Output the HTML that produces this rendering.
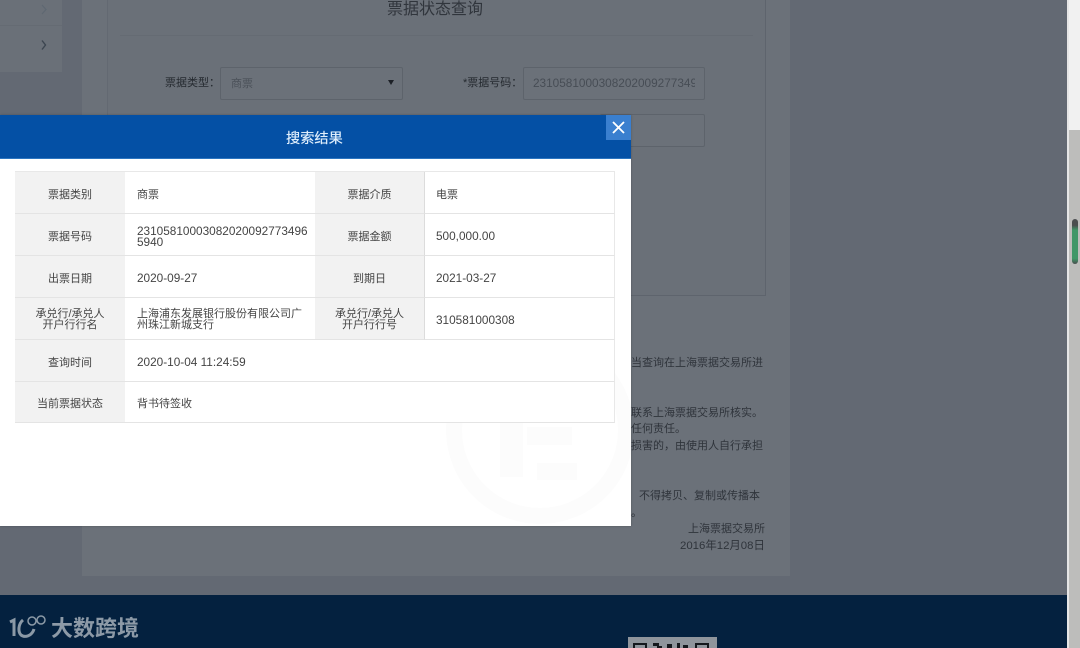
<!DOCTYPE html>
<html lang="zh">
<head>
<meta charset="utf-8">
<title>搜索结果</title>
<style>
html,body{margin:0;padding:0;width:1080px;height:648px;overflow:hidden;background:#636973}
body{position:relative;font-family:"Liberation Sans","Noto Sans CJK SC",sans-serif;color:#333}
.a{position:absolute;white-space:nowrap}
.bgt{color:#2f343b;font-size:11px;line-height:16px}
.cell{position:absolute;box-sizing:border-box;height:42px;padding-top:5px;border-right:1px solid #e8e8e8;border-bottom:1px solid #e4e4e4;display:flex;align-items:center;font-size:11px;line-height:11px;color:#444}
.two{padding-top:2px}
.num{font-size:11.8px;padding-top:4px}
.g{background:#f2f2f2;justify-content:center;text-align:center}
.w1{left:15px;width:110px}
.w2{left:315px;width:110px;border-right:1px solid #dcdcdc}
.v{background:#fff;left:125px;padding-left:12px;width:190px}
.v2{left:425px;width:190px;padding-left:11px;background:#fff}
.full{left:125px;width:490px;padding-left:12px;background:#fff}
</style>
</head>
<body>
<div class="a" style="left:0;top:0;width:62px;height:72px;background:#6a7078"></div>
<div class="a" style="left:0;top:25px;width:62px;height:1px;background:#656b73"></div>
<div class="a" style="left:82px;top:0;width:708px;height:576px;background:#6b7179"></div>
<div class="a" style="left:107px;top:0;width:657px;height:295px;background:#6a7078;border:1px solid #636972;border-top:0;border-right-color:#5e646d;border-bottom-color:#5e646d"></div>
<div class="a" style="left:120px;top:35px;width:633px;height:1px;background:#656b73"></div>
<div class="a" style="left:387px;top:1px;font-size:16px;line-height:18px;color:#30353c">票据状态查询</div>

<svg class="a" style="left:38px;top:2px" width="12" height="50" viewBox="0 0 12 50" fill="none">
<path d="M4 3l4 4.500-4 4.500" stroke="#5f6872" stroke-width="1.200"/>
<path d="M4 38.500l3.500 4.500-3.500 4.500" stroke="#3c4550" stroke-width="1.400"/>
</svg>

<div class="a" style="left:165px;top:75px;font-size:11px;line-height:16px;color:#252a30">票据类型：</div>
<div class="a" style="left:220px;top:67px;width:181px;height:31px;border:1px solid #5d636b;border-radius:2px;background:#6b7179"></div>
<div class="a" style="left:231px;top:76px;font-size:11px;line-height:16px;color:#4b5159">商票</div>
<div class="a" style="left:388px;top:80px;width:0;height:0;border-left:3px solid transparent;border-right:3px solid transparent;border-top:5px solid #1c2026"></div>

<div class="a" style="left:463px;top:75px;font-size:11px;line-height:16px;color:#252a30">*票据号码：</div>
<div class="a" style="left:523px;top:67px;width:180px;height:31px;border:1px solid #5d636b;border-radius:2px;background:#6b7179"></div>
<div class="a" style="left:533px;top:74px;width:162px;overflow:hidden;font-size:11.800px;line-height:18px;color:#474d55">2310581000308202009277349</div>
<div class="a" style="left:600px;top:114px;width:103px;height:31px;border:1px solid #5d636b;border-radius:2px;background:#6b7179"></div>

<div class="a bgt" style="left:631px;top:355px">当查询在上海票据交易所进</div>
<div class="a bgt" style="left:631px;top:405px">联系上海票据交易所核实。</div>
<div class="a bgt" style="left:631px;top:421px">任何责任。</div>
<div class="a bgt" style="left:631px;top:438px">损害的，由使用人自行承担</div>
<div class="a bgt" style="left:639px;top:488px">不得拷贝、复制或传播本</div>
<div class="a bgt" style="left:631px;top:505px">。</div>
<div class="a bgt" style="left:688px;top:521px">上海票据交易所</div>
<div class="a bgt" style="left:680px;top:538px;font-size:11.400px">2016年12月08日</div>

<div class="a" style="left:0;top:115px;width:631px;height:411px;background:#fff;box-shadow:0 0 2px rgba(0,0,0,.25)"></div>
<svg class="a" style="left:440px;top:336px" width="191" height="190" viewBox="0 0 191 190" fill="none">
<circle cx="100" cy="94" r="86" stroke="#fcfcfc" stroke-width="16"/>
<path d="M60 51h23v90H60zM97 54h40v20H97zM87 91h45v18H87zM97 127h40v17H97z" fill="#fcfcfc"/>
</svg>
<div class="a" style="left:0;top:115px;width:631px;height:44px;background:#0450a5;border-bottom:1px solid #2c75c0;box-sizing:border-box"></div>
<div class="a" style="left:286px;top:128px;font-size:14.200px;line-height:22px;color:#dfeefc;text-shadow:0 0 .5px #dfeefc">搜索结果</div>
<div class="a" style="left:606px;top:115px;width:25px;height:25px;background:#3a7fcf"></div>
<svg class="a" style="left:606px;top:115px" width="25" height="25" viewBox="0 0 25 25" fill="none">
<path d="M7 7l11 11M18 7L7 18" stroke="#fff" stroke-width="1.800"/>
</svg>

<div class="a" style="left:15px;top:171px;width:600px;height:252px;background:#fff;border-top:1px solid #e8e8e8;box-sizing:border-box"></div>

<div class="cell g w1" style="top:172px;border-right:0">票据类别</div>
<div class="cell v" style="top:172px;border-right:0">商票</div>
<div class="cell g w2" style="top:172px">票据介质</div>
<div class="cell v2" style="top:172px">电票</div>

<div class="cell g w1" style="top:214px;border-right:0">票据号码</div>
<div class="cell v num two" style="top:214px;border-right:0"><span>23105810003082020092773496<br>5940</span></div>
<div class="cell g w2" style="top:214px">票据金额</div>
<div class="cell v2 num" style="top:214px">500,000.00</div>

<div class="cell g w1" style="top:256px;border-right:0">出票日期</div>
<div class="cell v num" style="top:256px;border-right:0">2020-09-27</div>
<div class="cell g w2" style="top:256px">到期日</div>
<div class="cell v2 num" style="top:256px">2021-03-27</div>

<div class="cell g w1 two" style="top:298px;border-right:0">承兑行/承兑人<br>开户行行名</div>
<div class="cell v two" style="top:298px;border-right:0"><span>上海浦东发展银行股份有限公司广<br>州珠江新城支行</span></div>
<div class="cell g w2 two" style="top:298px">承兑行/承兑人<br>开户行行号</div>
<div class="cell v2 num" style="top:298px">310581000308</div>

<div class="cell g w1" style="top:340px;border-right:0">查询时间</div>
<div class="cell full num" style="top:340px">2020-10-04 11:24:59</div>

<div class="cell g w1" style="top:382px;height:41px;border-right:0">当前票据状态</div>
<div class="cell full" style="top:382px;height:41px">背书待签收</div>

<div class="a" style="left:0;top:595px;width:1067px;height:53px;background:#04213f"></div>
<svg class="a" style="left:8px;top:612px" width="42" height="30" viewBox="0 0 42 30" fill="none" stroke="#8b99a6">
<path d="M2 10l4-2v16" stroke-width="3"/>
<path d="M15 8C10 12 10 20 13 23C17 26 24 24 26 17" stroke-width="3"/>
<circle cx="24" cy="9" r="4" stroke-width="1.500"/>
<circle cx="33" cy="8" r="4" stroke-width="1.500"/>
</svg>
<div class="a" style="left:51px;top:616px;font-size:22px;line-height:26px;font-weight:700;color:#8d9aa7">大数跨境</div>

<div class="a" style="left:628px;top:637px;width:89px;height:11px;background:#8f959c"></div>
<svg class="a" style="left:633px;top:643px" width="80" height="5" viewBox="0 0 80 5">
<path d="M0 0h14v5h-2V2H2v3H0zM20 0h6v3h3v2h-5V3h-4zM34 1h5v4h-5zM44 0h3v5h-3zM50 2h5v3h-5zM62 0h14v5h-2V2H64v3h-2z" fill="#14181d"/>
</svg>

<div class="a" style="left:1067px;top:0;width:13px;height:130px;background:#f1f1f1"></div>
<div class="a" style="left:1067px;top:130px;width:13px;height:518px;background:#bdbdbb"></div>
<div class="a" style="left:1067px;top:0;width:2px;height:648px;background:#e6e6e6"></div>
<div class="a" style="left:1072px;top:219px;width:6px;height:45px;border-radius:3px;background:linear-gradient(#4a4d4e 0,#4a4d4e 14%,#3f9767 25%,#3f9767 88%,#4a4d4e 100%)"></div>
</body>
</html>
